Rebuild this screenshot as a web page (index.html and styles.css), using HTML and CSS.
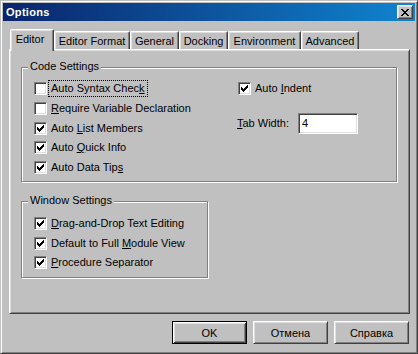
FILE: index.html
```html
<!DOCTYPE html>
<html lang="en">
<head>
    <meta charset="UTF-8">
    <title>Options</title>
    <link rel="stylesheet" href="styles.css">
</head>
<body>
    <svg class="defs" width="0" height="0">
        <symbol id="tick" viewBox="0 0 7 7">
            <path d="M6 0h1v1h-1z M5 1h2v1h-2z M0 2h1v1h-1z M4 2h3v1h-3z M0 3h2v1h-2z M3 3h3v1h-3z M0 4h5v1h-5z M1 5h3v1h-3z M2 6h1v1h-1z"/>
        </symbol>
    </svg>
    <div class="window">
        <div class="titlebar">
            <span class="title">Options</span>
            <button class="close-button">
                <svg width="8" height="7" viewBox="0 0 8 7" shape-rendering="crispEdges">
                    <path d="M0 0h2v1h-2z M6 0h2v1h-2z M1 1h2v1h-2z M5 1h2v1h-2z M2 2h4v1h-4z M3 3h2v1h-2z M2 4h4v1h-4z M1 5h2v1h-2z M5 5h2v1h-2z M0 6h2v1h-2z M6 6h2v1h-2z"/>
                </svg>
            </button>
        </div>

        <div class="content">
            <div class="tabs">
                <div class="tab active" style="width: 44px">Editor</div>
                <div class="tab" style="width: 76px">Editor Format</div>
                <div class="tab" style="width: 49px">General</div>
                <div class="tab" style="width: 49px">Docking</div>
                <div class="tab" style="width: 73px">Environment</div>
                <div class="tab" style="width: 58px">Advanced</div>
            </div>

            <div class="panel">
                <div class="group code-settings">
                    <span class="legend">Code Settings</span>
                    <div class="column">
                        <div class="check-row">
                            <span class="checkbox"></span>
                            <span class="label focus">Auto Syntax Chec<u>k</u></span>
                        </div>
                        <div class="check-row">
                            <span class="checkbox"></span>
                            <span class="label"><u>R</u>equire Variable Declaration</span>
                        </div>
                        <div class="check-row">
                            <span class="checkbox"><svg><use href="#tick"/></svg></span>
                            <span class="label">Auto <u>L</u>ist Members</span>
                        </div>
                        <div class="check-row">
                            <span class="checkbox"><svg><use href="#tick"/></svg></span>
                            <span class="label">Auto <u>Q</u>uick Info</span>
                        </div>
                        <div class="check-row">
                            <span class="checkbox"><svg><use href="#tick"/></svg></span>
                            <span class="label">Auto Data Tip<u>s</u></span>
                        </div>
                    </div>
                    <div class="column">
                        <div class="check-row">
                            <span class="checkbox"><svg><use href="#tick"/></svg></span>
                            <span class="label">Auto <u>I</u>ndent</span>
                        </div>
                        <div class="field-row">
                            <span class="field-label"><u>T</u>ab Width:</span>
                            <span class="textbox">4</span>
                        </div>
                    </div>
                </div>

                <div class="group window-settings">
                    <span class="legend">Window Settings</span>
                    <div class="column">
                        <div class="check-row">
                            <span class="checkbox"><svg><use href="#tick"/></svg></span>
                            <span class="label"><u>D</u>rag-and-Drop Text Editing</span>
                        </div>
                        <div class="check-row">
                            <span class="checkbox"><svg><use href="#tick"/></svg></span>
                            <span class="label">Default to Full <u>M</u>odule View</span>
                        </div>
                        <div class="check-row">
                            <span class="checkbox"><svg><use href="#tick"/></svg></span>
                            <span class="label"><u>P</u>rocedure Separator</span>
                        </div>
                    </div>
                </div>
            </div>

            <div class="buttons">
                <button class="push default">OK</button>
                <button class="push">Отмена</button>
                <button class="push">Справка</button>
            </div>
        </div>
    </div>
</body>
</html>
```

FILE: styles.css
```css
/* Fenêtre classique */
body {
    margin: 0;
    font-family: 'Liberation Sans', Arial, sans-serif;
    font-size: 11px;
    color: #000;
    background: #c0c0c0;
}

.defs {
    position: absolute;
}

.window {
    box-sizing: border-box;
    width: 418px;
    height: 354px;
    padding: 2px;
    background: #c0c0c0;
    border: 1px solid;
    border-color: #c0c0c0 #404040 #404040 #c0c0c0;
    box-shadow: inset 1px 1px 0 #fff, inset -1px -1px 0 #808080;
}

.titlebar {
    height: 18px;
    display: flex;
    align-items: center;
    justify-content: space-between;
    padding-left: 3px;
    background: linear-gradient(to right, #0a246a, #1084d0);
    color: #fff;
    font-weight: bold;
}

.title {
    letter-spacing: 0.3px;
}

.close-button {
    box-sizing: border-box;
    width: 16px;
    height: 14px;
    margin-right: 2px;
    padding: 0;
    display: flex;
    justify-content: center;
    align-items: center;
    background: #c0c0c0;
    border: 1px solid;
    border-color: #fff #404040 #404040 #fff;
    box-shadow: inset 1px 1px 0 #dfdfdf, inset -1px -1px 0 #808080;
}

.content {
    padding: 8px 5px 0 6px;
}

/* Onglets */
.tabs {
    display: flex;
    align-items: flex-end;
    height: 20px;
    padding-left: 1px;
    position: relative;
    z-index: 1;
}

.tab {
    box-sizing: border-box;
    height: 18px;
    padding-top: 2px;
    text-align: center;
    line-height: 14px;
    white-space: nowrap;
    background: #c0c0c0;
    border-top: 1px solid #fff;
    border-left: 1px solid #fff;
    border-right: 1px solid #404040;
    border-radius: 2px 2px 0 0;
    box-shadow: inset -1px 0 0 #808080, inset 1px 1px 0 #dfdfdf;
}

.tab.active {
    height: 22px;
    margin-bottom: -2px;
    padding-top: 2px;
    padding-right: 4px;
}

.panel {
    box-sizing: border-box;
    width: 401px;
    height: 265px;
    padding: 17px 0 0 11px;
    border: 1px solid;
    border-color: #fff #404040 #404040 #fff;
    box-shadow: inset 1px 1px 0 #dfdfdf, inset -1px -1px 0 #808080;
}

/* Cadres */
.group {
    box-sizing: border-box;
    position: relative;
    border: 1px solid #808080;
    box-shadow: 1px 1px 0 #fff, inset 1px 1px 0 #fff;
}

.legend {
    position: absolute;
    top: -8px;
    left: 6px;
    padding: 0 2px;
    line-height: 13px;
    background: #c0c0c0;
}

.code-settings {
    width: 376px;
    height: 115px;
    padding: 14px 0 0 12px;
    display: grid;
    grid-template-columns: 204px 1fr;
    align-items: start;
}

.window-settings {
    width: 187px;
    height: 77px;
    margin-top: 19px;
    padding: 15px 0 0 12px;
}

.column {
    display: flex;
    flex-direction: column;
    gap: 6.75px;
}

.window-settings .column {
    gap: 6.5px;
}

.check-row {
    display: flex;
    align-items: center;
    gap: 3px;
    height: 13px;
}

.checkbox {
    box-sizing: border-box;
    width: 13px;
    height: 13px;
    padding: 2px 0 0 2px;
    background: #fff;
    border: 1px solid;
    border-color: #808080 #fff #fff #808080;
    box-shadow: inset 1px 1px 0 #404040, inset -1px -1px 0 #dfdfdf;
}

.checkbox svg {
    display: block;
    width: 7px;
    height: 7px;
    shape-rendering: crispEdges;
}

.label {
    padding: 0 1px;
    line-height: 13px;
    white-space: nowrap;
}

.label.focus {
    outline: 1px dotted #000;
    outline-offset: 1px;
}

.field-row {
    display: flex;
    align-items: center;
    margin-top: 11px;
    margin-left: -1px;
}

.field-label {
    width: 61px;
}

.textbox {
    box-sizing: border-box;
    width: 60px;
    height: 21px;
    padding: 2px 0 0 3px;
    line-height: 14px;
    background: #fff;
    border: 1px solid;
    border-color: #808080 #fff #fff #808080;
    box-shadow: inset 1px 1px 0 #404040, inset -1px -1px 0 #dfdfdf;
}

/* Boutons */
.buttons {
    display: flex;
    justify-content: flex-end;
    gap: 6px;
    margin-top: 7px;
    padding-right: 1px;
}

.push {
    box-sizing: border-box;
    width: 75px;
    height: 23px;
    padding: 0;
    font-family: inherit;
    font-size: 11px;
    color: #000;
    background: #c0c0c0;
    border: 1px solid;
    border-color: #fff #404040 #404040 #fff;
    box-shadow: inset 1px 1px 0 #dfdfdf, inset -1px -1px 0 #808080;
}

.push.default {
    border-color: #000;
    box-shadow: inset 1px 1px 0 #fff, inset -1px -1px 0 #404040, inset 2px 2px 0 #dfdfdf, inset -2px -2px 0 #808080;
}
```
